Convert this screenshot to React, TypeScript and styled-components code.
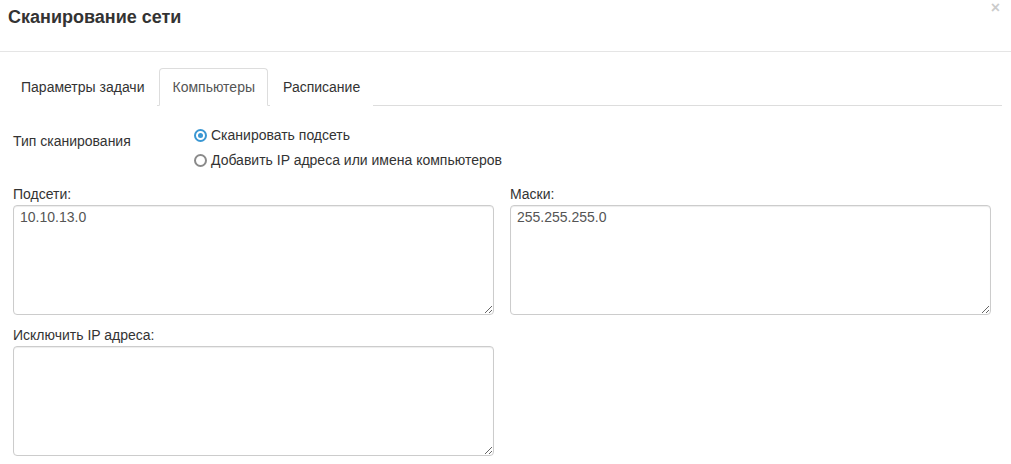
import React from "react";
import styled, { createGlobalStyle } from "styled-components";

const GlobalStyle = createGlobalStyle`
  html, body {
    margin: 0;
    padding: 0;
    background: #fff;
  }
  body {
    font-family: "Liberation Sans", Arial, sans-serif;
    font-size: 14px;
    line-height: 20px;
    color: #333;
  }
  * {
    box-sizing: border-box;
  }
`;

const tabs = ["Параметры задачи", "Компьютеры", "Расписание"];

const App = () => {
  const [active, setActive] = React.useState(1);
  const [mode, setMode] = React.useState("subnet");

  return (
    <>
      <GlobalStyle />
      <StyledModal>
        <div className="modal__header">
          <h4 className="modal__title">Сканирование сети</h4>
          <button className="modal__close" type="button">
            ×
          </button>
        </div>

        <div className="modal__body">
          <ul className="tabs">
            {tabs.map((tab, index) => (
              <Tab key={tab} $active={index === active} onClick={() => setActive(index)}>
                {tab}
              </Tab>
            ))}
          </ul>

          <div className="form">
            <div className="form__row">
              <div className="form__label">Тип сканирования</div>
              <div className="form__radios">
                <RadioLabel>
                  <Radio $checked={mode === "subnet"} onClick={() => setMode("subnet")} />
                  Сканировать подсеть
                </RadioLabel>
                <RadioLabel>
                  <Radio $checked={mode === "hosts"} onClick={() => setMode("hosts")} />
                  Добавить IP адреса или имена компьютеров
                </RadioLabel>
              </div>
            </div>

            <div className="form__grid">
              <div className="field">
                <label className="field__label">Подсети:</label>
                <TextArea defaultValue="10.10.13.0" />
              </div>
              <div className="field">
                <label className="field__label">Маски:</label>
                <TextArea defaultValue="255.255.255.0" />
              </div>
              <div className="field">
                <label className="field__label">Исключить IP адреса:</label>
                <TextArea defaultValue="" />
              </div>
            </div>
          </div>
        </div>
      </StyledModal>
    </>
  );
};

const StyledModal = styled.div`
  width: 1011px;
  height: 464px;
  overflow: hidden;

  .modal__header {
    position: relative;
    height: 52px;
    padding: 5px 8px 0;
    border-bottom: 1px solid #e5e5e5;
  }

  .modal__title {
    margin: 0;
    font-size: 18px;
    font-weight: bold;
    line-height: 24px;
    color: #333;
  }

  .modal__close {
    position: absolute;
    top: 1px;
    right: 11px;
    padding: 0;
    border: 0;
    background: transparent;
    font-family: "Liberation Sans", Arial, sans-serif;
    font-size: 16px;
    font-weight: bold;
    line-height: 14px;
    color: #000;
    opacity: 0.2;
    cursor: pointer;
  }

  .modal__body {
    padding: 16px 9px 0 8px;
  }

  .tabs {
    display: flex;
    margin: 0;
    padding: 0;
    list-style: none;
    border-bottom: 1px solid #ddd;
  }

  .form {
    padding: 0 11px 0 5px;
  }

  .form__row {
    display: flex;
    padding-top: 25px;
  }

  .form__label {
    width: 180px;
    line-height: 20px;
  }

  .form__radios {
    display: flex;
    flex-direction: column;
    gap: 5px;
    margin-top: -6px;
  }

  .form__grid {
    display: grid;
    grid-template-columns: 1fr 1fr;
    column-gap: 16px;
    row-gap: 10px;
    margin-top: 14px;
  }

  .field {
    display: flex;
    flex-direction: column;
  }

  .field__label {
    font-weight: normal;
    line-height: 20px;
    margin-bottom: 1px;
  }
`;

const Tab = styled.li<{ $active: boolean }>`
  margin-right: 2px;
  margin-bottom: -1px;
  padding: 8px 12px;
  line-height: 20px;
  border: 1px solid ${(p) => (p.$active ? "#ddd" : "transparent")};
  border-bottom-color: ${(p) => (p.$active ? "#fff" : "transparent")};
  border-radius: 4px 4px 0 0;
  background: #fff;
  color: ${(p) => (p.$active ? "#555" : "#333")};
  cursor: pointer;
`;

const RadioLabel = styled.label`
  display: flex;
  align-items: center;
  gap: 4px;
  line-height: 20px;
  cursor: pointer;
`;

const Radio = styled.span<{ $checked: boolean }>`
  position: relative;
  display: inline-block;
  width: 13px;
  height: 13px;
  margin-left: 1px;
  border-radius: 50%;
  border: 2px solid ${(p) => (p.$checked ? "#3a97d3" : "#8a8a8a")};
  background: #fff;

  &::after {
    content: "";
    display: ${(p) => (p.$checked ? "block" : "none")};
    position: absolute;
    top: 2px;
    left: 2px;
    width: 5px;
    height: 5px;
    border-radius: 50%;
    background: #3a97d3;
  }
`;

const TextArea = styled.textarea`
  display: block;
  width: 100%;
  height: 110px;
  padding: 1px 6px;
  border: 1px solid #ccc;
  border-radius: 4px;
  box-shadow: inset 0 1px 1px rgba(0, 0, 0, 0.075);
  font-family: "Liberation Sans", Arial, sans-serif;
  font-size: 14px;
  line-height: 20px;
  color: #555;
  resize: vertical;
  outline: none;
`;

export default App;
